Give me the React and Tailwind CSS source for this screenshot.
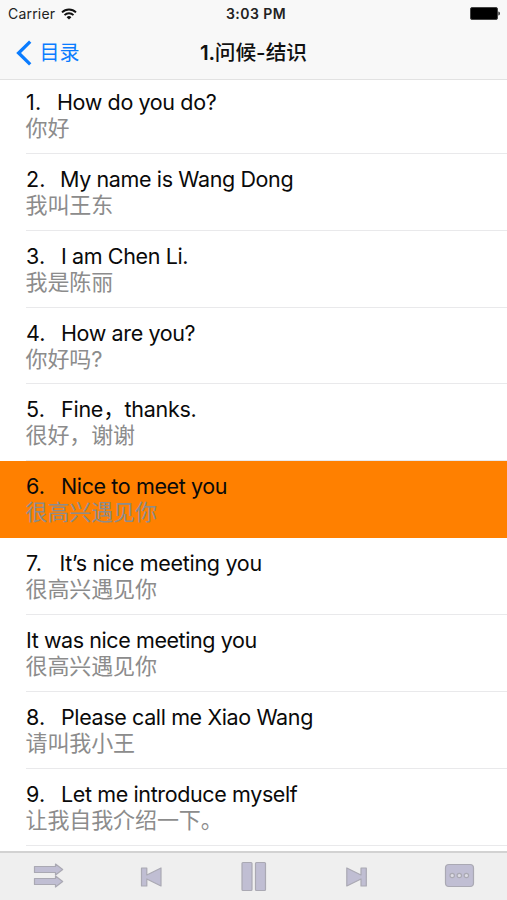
import React from "react";

const phrases = [
  { no: "1.", en: "How do you do?", zh: "你好", pad: "w-[31px]" },
  { no: "2.", en: "My name is Wang Dong", zh: "我叫王东", pad: "w-[34px]" },
  { no: "3.", en: "I am Chen Li.", zh: "我是陈丽", pad: "w-[35px]" },
  { no: "4.", en: "How are you?", zh: "你好吗?", pad: "w-[35px]" },
  { no: "5.", en: "Fine，thanks.", zh: "很好，谢谢", pad: "w-[35px]", track: "tracking-[-0.25px]" },
  { no: "6.", en: "Nice to meet you", zh: "很高兴遇见你", pad: "w-[35px]", active: true },
  { no: "7.", en: "It’s nice meeting you", zh: "很高兴遇见你", pad: "w-[33.5px]", track: "tracking-[-0.3px]" },
  { no: "", en: "It was nice meeting you", zh: "很高兴遇见你", pad: "", track: "tracking-[-0.42px]" },
  { no: "8.", en: "Please call me Xiao Wang", zh: "请叫我小王", pad: "w-[35px]" },
  { no: "9.", en: "Let me introduce myself", zh: "让我自我介绍一下。", pad: "w-[35px]" },
];

function StatusBar() {
  return (
    <div className="grid h-[27px] grid-cols-3 items-center px-2 text-[14px] leading-[27px] text-[#222]">
      <div className="flex items-center gap-[6px]">
        <span className="tracking-[0.2px]">Carrier</span>
        <svg width="16" height="12" viewBox="0 0 16 12" fill="none" stroke="#111" strokeWidth="1.9">
          <path d="M1 4.4a10 10 0 0 1 14 0" />
          <path d="M3.5 7.1a6.4 6.4 0 0 1 9 0" />
          <path d="M5.6 9.2a3.4 3.4 0 0 1 4.8 0L8 11.6z" fill="#111" stroke="none" />
        </svg>
      </div>
      <div className="pl-[5px] text-center text-[14px] font-semibold tracking-[0.45px] whitespace-nowrap">
        3:03 PM
      </div>
      <div className="flex justify-end">
        <svg className="-mr-[2px]" width="31" height="13" viewBox="0 0 31 13">
          <rect x="0.5" y="0.5" width="27" height="12" rx="1.5" fill="#000" stroke="#444" />
          <path d="M28.4 4.5c2 .5 2 3.5 0 4z" fill="#222" />
        </svg>
      </div>
    </div>
  );
}

function NavBar() {
  return (
    <div className="relative flex h-[52px] items-center justify-center">
      <div className="absolute left-[16px] flex items-center gap-[7.5px] text-[20px] text-[#0a7cff]">
        <svg width="16" height="26" viewBox="0 0 16 26" fill="none" stroke="#0a7cff" strokeWidth="3.3">
          <path d="M14.2 1.6 2.6 13l11.6 11.4" />
        </svg>
        <span>目录</span>
      </div>
      <h1 className="text-[20.7px] font-medium text-[#111]">
        <span className="font-semibold tracking-[-0.3px]">1.</span>问候-结识
      </h1>
    </div>
  );
}

function PhraseRow({ no, en, zh, pad, active, track = "tracking-[-0.38px]" }) {
  return (
    <li className={active ? "h-[76.9px] bg-[#ff8000] pl-[26px]" : "h-[76.9px] pl-[26px]"}>
      <div className={active ? "h-full pt-[12px]" : "h-full border-b border-[#e9e9eb] pt-[12px]"}>
        <div className="flex text-[21.5px] leading-[26px] whitespace-nowrap text-[#0a0a0a]">
          {no && <span className={`${pad} tracking-[0.2px]`}>{no}</span>}
          <span className={track}>{en}</span>
        </div>
        <div className="-ml-[0.5px] text-[22px] leading-[26px] tracking-[-0.1px] text-[#8c8c8c]">{zh}</div>
      </div>
    </li>
  );
}

function Toolbar() {
  return (
    <div className="h-[49px] border-t-2 border-[#d2d2d2] bg-[#efefef]">
      <svg width="507" height="47" viewBox="0 853 507 47" fill="#c0bed3" stroke="#aaa9b3" strokeWidth="1.2" strokeLinejoin="round">
        <path d="M34.5 866.5h21v-2.5l7.2 5.5-7.2 5.5v-2.5h-21z" />
        <path d="M34.5 878.5h21v-2.5l7.2 5.5-7.2 5.5v-2.5h-21z" />
        <path d="M141.5 868h5.3v7l14.2-7v18l-14.2-7v7h-5.3z" />
        <rect x="242" y="862.5" width="10" height="28" rx="1" />
        <rect x="255.5" y="862.5" width="10" height="28" rx="1" />
        <path d="M366.3 868h-5.3v7l-14.2-7v18l14.2-7v7h5.3z" />
        <rect x="445.5" y="864.5" width="28" height="22" rx="3.5" />
        <g fill="#dddce4">
          <circle cx="452.2" cy="875.5" r="2.2" />
          <circle cx="459.3" cy="875.5" r="2.2" />
          <circle cx="466.4" cy="875.5" r="2.2" />
        </g>
      </svg>
    </div>
  );
}

export default function App() {
  return (
    <div className="flex h-[900px] w-[507px] flex-col overflow-hidden bg-white font-['Inter','Noto_Sans_CJK_SC',sans-serif]">
      <header className="h-[80px] shrink-0 border-b border-[#e2e2e2] bg-[#f8f8f8]">
        <StatusBar />
        <NavBar />
      </header>
      <ul className="-mt-[3.1px] min-h-0 flex-1 overflow-hidden">
        {phrases.map((p, i) => (
          <PhraseRow key={i} {...p} />
        ))}
      </ul>
      <Toolbar />
    </div>
  );
}
